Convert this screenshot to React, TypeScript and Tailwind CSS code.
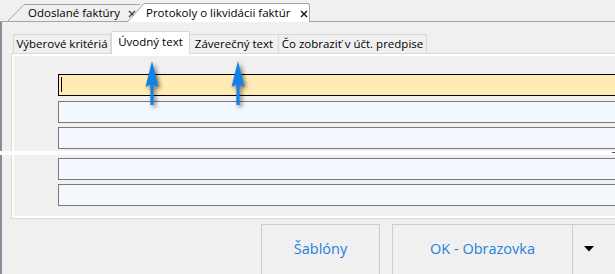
import React from "react";

const CloseX = ({ color }: { color: string }) => (
  <svg width="8" height="8" viewBox="0 0 8 8" className="block">
    <path d="M1 1 L7 7 M7 1 L1 7" stroke={color} strokeWidth="1.4" />
  </svg>
);

const Arrow = ({ left }: { left: string }) => (
  <svg
    width="24"
    height="48"
    viewBox="0 0 24 48"
    className={`absolute top-[60px] ${left} drop-shadow-[2px_2px_2px_rgba(0,0,0,0.55)]`}
  >
    <path d="M12 1 L18.5 27 L13.6 24.5 L13.6 45 L10.4 45 L10.4 24.5 L5.5 27 Z" fill="#1381ea" />
  </svg>
);

const Field = ({ active, mt }: { active?: boolean; mt: string }) => (
  <div
    className={`relative h-[22px] w-[570px] shrink-0 ${mt} border ${
      active ? "border-black bg-[#ffecb4]" : "border-[#7a7a7a] bg-[#f3f8fe]"
    }`}
  >
    {active && <div className="absolute left-[2px] top-[2px] h-[15px] w-px bg-black"></div>}
  </div>
);

const App = () => {
  return (
    <div className="relative h-[274px] w-[615px] overflow-hidden bg-[#f0f0f0] font-['Open_Sans',sans-serif] text-black">
      {/* document tabs */}
      <div className="flex h-[22px] items-end border-b border-[#a5a5a5] pl-[8px]">
        <div className="flex h-[17px] shrink-0 items-end">
          <svg width="16" height="17" viewBox="0 0 16 17" className="block">
            <path d="M0 17 L16 0.5" stroke="#a5a5a5" fill="none" />
          </svg>
          <div className="flex h-[17px] w-[116px] items-center border-t border-[#a5a5a5] pl-[4px] text-[11.5px] leading-none">
            <span>Odoslané faktúry</span>
            <span className="ml-[8px] mt-[1px]">
              <CloseX color="#444" />
            </span>
          </div>
        </div>
        <div className="relative z-10 -mb-px -ml-[12px] flex h-[19px] shrink-0 items-end">
          <svg width="16" height="19" viewBox="0 0 16 19" className="block">
            <path d="M0 19 L16 0.5 L16 19 Z" fill="#ffffff" />
            <path d="M0 18.5 L16 0.5" stroke="#a5a5a5" fill="none" />
          </svg>
          <div className="flex h-[19px] w-[166px] items-center rounded-tr-[3px] border-r border-t border-[#a5a5a5] bg-white pl-[2px] text-[11.5px] leading-none">
            <span>Protokoly o likvidácii faktúr</span>
            <span className="ml-[10px] mt-[1px]">
              <CloseX color="#111" />
            </span>
          </div>
        </div>
      </div>

      {/* body */}
      <div className="flex h-[252px] flex-col border-l-2 border-[#858d98] pl-[9px] pt-[9px]">
        {/* inner tabs */}
        <div className="relative z-10 flex h-[22px] items-end pl-[2px] text-[11.5px] leading-none">
          <div className="flex h-[19px] w-[98px] shrink-0 items-center justify-center border border-b-0 border-[#d9d9d9]">
            Výberové kritériá
          </div>
          <div className="-mb-px flex h-[23px] w-[79px] shrink-0 items-center justify-center border border-b-0 border-[#d9d9d9] bg-white pb-[2px]">
            Úvodný text
          </div>
          <div className="flex h-[19px] w-[89px] shrink-0 items-center justify-center border border-b-0 border-l-0 border-[#d9d9d9]">
            Záverečný text
          </div>
          <div className="flex h-[19px] w-[148px] shrink-0 items-center justify-center border border-b-0 border-l-0 border-[#d9d9d9]">
            Čo zobraziť v účt. predpise
          </div>
        </div>

        {/* panel */}
        <div className="w-[620px] shrink-0 border border-[#d9d9d9]">
          <div className="flex flex-col border-2 border-white pb-[10px] pl-[44px] pt-[18px]">
            <Field active mt="mt-0" />
            <Field mt="mt-[5px]" />
            <Field mt="mt-[4px]" />
            <Field mt="mt-[9px]" />
            <Field mt="mt-[4px]" />
          </div>
        </div>

        {/* buttons */}
        <div className="ml-[250px] mt-[5px] flex gap-[12px] text-[14.5px] text-[#2580dc]">
          <button className="flex h-[54px] w-[119px] shrink-0 items-center justify-center border border-[#cdcdcd] bg-[#f0f0f0] pb-[5px]">
            Šablóny
          </button>
          <div className="flex shrink-0">
            <button className="flex h-[54px] w-[181px] shrink-0 items-center justify-center border border-[#cdcdcd] bg-[#f0f0f0] pb-[5px]">
              OK - Obrazovka
            </button>
            <button className="flex h-[54px] w-[50px] shrink-0 items-start justify-start border border-l-0 border-[#cdcdcd] bg-[#f0f0f0] pl-[11px] pt-[21px]">
              <svg width="10" height="6" viewBox="0 0 10 6" className="block">
                <path d="M0 0 L10 0 L5 5.5 Z" fill="#000" />
              </svg>
            </button>
          </div>
        </div>
      </div>

      {/* arrows */}
      <Arrow left="left-[140px]" />
      <Arrow left="left-[226px]" />

      {/* white splice strip */}
      <div className="absolute left-0 top-[151px] h-[4px] w-full bg-white"></div>
      <div className="absolute left-[612px] top-[152px] h-px w-[3px] bg-[#555]"></div>
    </div>
  );
};

export default App;
